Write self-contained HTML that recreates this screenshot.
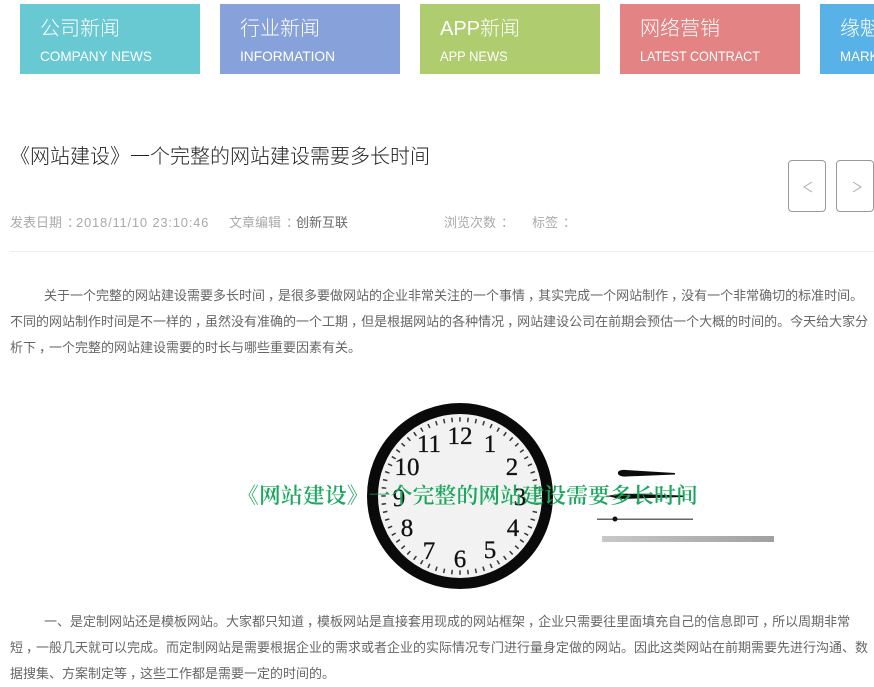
<!DOCTYPE html>
<html lang="zh-CN">
<head>
<meta charset="utf-8">
<style>
html,body{margin:0;padding:0;background:#fff;}
body{width:874px;height:678px;overflow:hidden;position:relative;font-family:"Liberation Sans","Noto Sans CJK SC",sans-serif;}
.a{position:absolute;white-space:nowrap;}
.tab{position:absolute;top:4px;width:180px;height:70px;color:#fff;overflow:hidden;}
.tab .t{position:absolute;left:20px;top:10px;font-size:20px;line-height:30px;font-weight:300;white-space:nowrap;}
.tab .e{position:absolute;left:20px;top:43px;font-size:14px;line-height:18px;white-space:nowrap;transform-origin:0 50%;}
.btn{position:absolute;top:160px;width:36px;height:50px;border:1px solid #999;border-radius:4px;background:#fff;}
.l{position:absolute;left:10px;font-size:13px;line-height:26px;height:26px;color:#666;white-space:nowrap;font-family:"Liberation Sans","WenQuanYi Zen Hei","Noto Sans CJK SC",sans-serif;}
.m{position:absolute;top:214px;font-size:13px;line-height:18px;color:#aaa;white-space:nowrap;font-family:"Liberation Sans","WenQuanYi Zen Hei","Noto Sans CJK SC",sans-serif;}
.c{font-style:normal;position:relative;left:3px;}
.k{font-style:normal;position:relative;left:5px;}
</style>
</head>
<body>
<div class="tab" style="left:20px;background:#69c9d3"><div class="t">公司新闻</div><div class="e" style="transform:scaleX(.97)">COMPANY NEWS</div></div>
<div class="tab" style="left:220px;background:#87a1da"><div class="t">行业新闻</div><div class="e" style="transform:scaleX(.98)">INFORMATION</div></div>
<div class="tab" style="left:420px;background:#afcd6f"><div class="t">APP新闻</div><div class="e" style="transform:scaleX(.92)">APP NEWS</div></div>
<div class="tab" style="left:620px;background:#e48383"><div class="t">网络营销</div><div class="e" style="transform:scaleX(.9)">LATEST CONTRACT</div></div>
<div class="tab" style="left:820px;width:54px;background:#58b2e8"><div class="t">缘魁</div><div class="e" style="transform:scaleX(.95)">MARKET</div></div>

<div class="a" style="left:10px;top:142px;font-size:20px;line-height:30px;color:#222;font-weight:300;">《网站建设》一个完整的网站建设需要多长时间</div>

<div class="btn" style="left:788px;"><svg width="36" height="50" style="position:absolute;left:0;top:0"><path d="M23 21 L15 26 L23 31" fill="none" stroke="#aaa" stroke-width="1"/></svg></div>
<div class="btn" style="left:836px;"><svg width="36" height="50" style="position:absolute;left:0;top:0"><path d="M16 21 L24 26 L16 31" fill="none" stroke="#aaa" stroke-width="1"/></svg></div>

<div class="m" style="left:10px;">发表日期<i class="k">：</i><span style="letter-spacing:.78px;margin-left:1px">2018/11/10 23:10:46</span></div>
<div class="m" style="left:229px;">文章编辑<i class="k">：</i><span style="color:#666;margin-left:2px">创新互联</span></div>
<div class="m" style="left:444px;">浏览次数<i class="k">：</i></div>
<div class="m" style="left:532px;">标签<i class="k">：</i></div>
<div class="a" style="left:10px;top:251px;width:864px;height:1px;background:#eee;"></div>

<div class="l" style="left:44px;top:283px;">关于一个完整的网站建设需要多长时间<i class="c">，</i>是很多要做网站的企业非常关注的一个事情<i class="c">，</i>其实完成一个网站制作<i class="c">，</i>没有一个非常确切的标准时间。</div>
<div class="l" style="top:309px;">不同的网站制作时间是不一样的<i class="c">，</i>虽然没有准确的一个工期<i class="c">，</i>但是根据网站的各种情况<i class="c">，</i>网站建设公司在前期会预估一个大概的时间的。今天给大家分</div>
<div class="l" style="top:335px;">析下<i class="c">，</i>一个完整的网站建设需要的时长与哪些重要因素有关。</div>

<svg class="a" style="left:0;top:390px;filter:blur(.35px)" width="874" height="210" viewBox="0 390 874 210">
<defs>
<linearGradient id="g" x1="0" x2="1" y1="0" y2="0"><stop offset="0" stop-color="#c8c8c8"/><stop offset="1" stop-color="#a0a0a0"/></linearGradient>
</defs>
<circle cx="460" cy="496" r="87.500" fill="#f2f2f2" stroke="#0a0a0a" stroke-width="11"/>
<path d="M400 416 A100 100 0 0 1 520 416" fill="none" stroke="#fff" stroke-width="0.800" opacity=".5"/>
<circle cx="460" cy="496" r="76.500" fill="none" stroke="#333" stroke-width="4.500" stroke-dasharray="1.500 6.510" transform="rotate(-90.600 460 496)"/>
<g font-family="'Liberation Serif',serif" font-size="25" fill="#111" stroke="#111" stroke-width=".3" text-anchor="middle">
<text x="460" y="444">12</text>
<text x="490" y="452">1</text>
<text x="512" y="475">2</text>
<text x="520" y="505">3</text>
<text x="513" y="536">4</text>
<text x="490" y="558">5</text>
<text x="460" y="567">6</text>
<text x="429" y="559">7</text>
<text x="407" y="536">8</text>
<text x="399" y="506">9</text>
<text x="407" y="475">10</text>
<text x="429" y="452">11</text>
</g>
<path d="M618 472 Q620 469.500 626 470 L675 473 L675 474.500 L626 476.500 Q620 477 618 474 Z" fill="#0c0c0c"/>
<path d="M607 496 L620 493.500 L683 495.500 L683 497 L620 499 Z" fill="#0c0c0c"/>
<rect x="597" y="518.500" width="96" height="1.500" fill="#666"/>
<circle cx="615" cy="519" r="2" fill="#111" stroke="#111" stroke-width="1"/>
<rect x="602" y="536" width="172" height="6" fill="url(#g)"/>
<text x="237" y="503" font-family="'Liberation Serif','Noto Serif CJK SC',serif" font-weight="600" font-size="21.800" letter-spacing=".15" fill="#1aa75e">《网站建设》一个完整的网站建设需要多长时间</text>
</svg>

<div class="l" style="left:44px;top:609px;">一、是定制网站还是模板网站。大家都只知道<i class="c">，</i>模板网站是直接套用现成的网站框架<i class="c">，</i>企业只需要往里面填充自己的信息即可<i class="c">，</i>所以周期非常</div>
<div class="l" style="top:635px;">短<i class="c">，</i>一般几天就可以完成。而定制网站是需要根据企业的需求或者企业的实际情况专门进行量身定做的网站。因此这类网站在前期需要先进行沟通、数</div>
<div class="l" style="top:661px;">据搜集、方案制定等<i class="c">，</i>这些工作都是需要一定的时间的。</div>
</body>
</html>
